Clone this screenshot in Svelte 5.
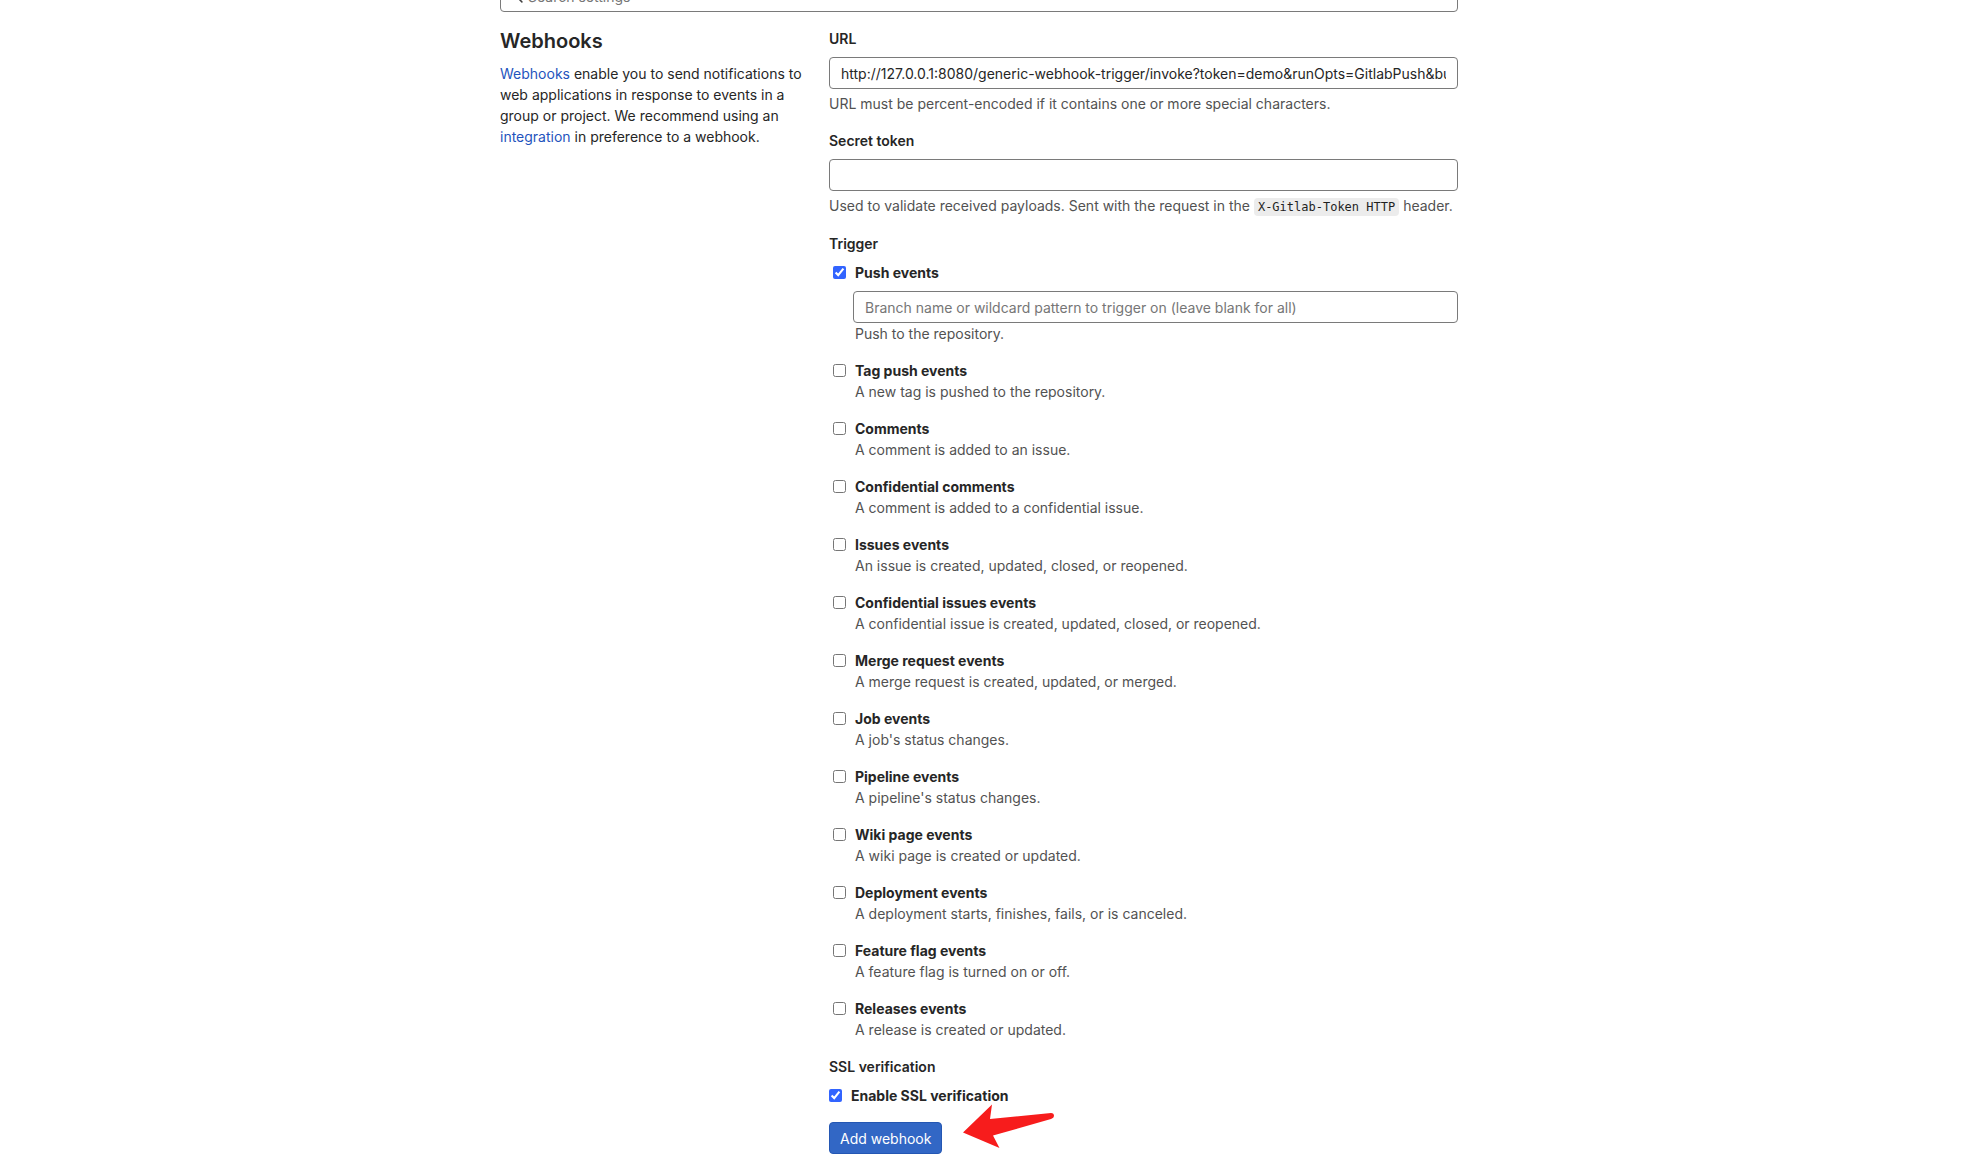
<script>
  let url = $state('http://127.0.0.1:8080/generic-webhook-trigger/invoke?token=demo&runOpts=GitlabPush&buil');
  let token = $state('');
  let branch = $state('');
  let query = $state('');
  let ssl = $state(true);

  let events = $state([
    { id: 'push', label: 'Push events', help: 'Push to the repository.', on: true, branch: true },
    { id: 'tag', label: 'Tag push events', help: 'A new tag is pushed to the repository.', on: false },
    { id: 'comments', label: 'Comments', help: 'A comment is added to an issue.', on: false },
    { id: 'conf-comments', label: 'Confidential comments', help: 'A comment is added to a confidential issue.', on: false },
    { id: 'issues', label: 'Issues events', help: 'An issue is created, updated, closed, or reopened.', on: false },
    { id: 'conf-issues', label: 'Confidential issues events', help: 'A confidential issue is created, updated, closed, or reopened.', on: false },
    { id: 'merge', label: 'Merge request events', help: 'A merge request is created, updated, or merged.', on: false },
    { id: 'job', label: 'Job events', help: "A job's status changes.", on: false },
    { id: 'pipeline', label: 'Pipeline events', help: "A pipeline's status changes.", on: false },
    { id: 'wiki', label: 'Wiki page events', help: 'A wiki page is created or updated.', on: false },
    { id: 'deployment', label: 'Deployment events', help: 'A deployment starts, finishes, fails, or is canceled.', on: false },
    { id: 'flag', label: 'Feature flag events', help: 'A feature flag is turned on or off.', on: false },
    { id: 'releases', label: 'Releases events', help: 'A release is created or updated.', on: false }
  ]);
</script>

<main class="page">
  <div class="search">
    <svg class="search-icon" viewBox="0 0 16 16" aria-hidden="true">
      <circle cx="6.5" cy="6.5" r="4.5" fill="none" stroke="currentColor" stroke-width="2" />
      <path d="M10 10l4.5 4.5" stroke="currentColor" stroke-width="2" stroke-linecap="round" />
    </svg>
    <input class="field" type="search" aria-label="Search settings" placeholder="Search settings" bind:value={query} />
  </div>

  <div class="columns">
    <section class="intro">
      <h1>Webhooks</h1>
      <p>
        <a href="#webhooks">Webhooks</a> enable you to send notifications to web applications in response to events in a
        group or project. We recommend using an <a href="#integration">integration</a> in preference to a webhook.
      </p>
    </section>

    <form class="form" onsubmit={(e) => e.preventDefault()}>
      <div class="group">
        <label class="title" for="url">URL</label>
        <input class="field" id="url" type="text" bind:value={url} />
        <p class="help">URL must be percent-encoded if it contains one or more special characters.</p>
      </div>

      <div class="group">
        <label class="title" for="token">Secret token</label>
        <input class="field" id="token" type="password" bind:value={token} />
        <p class="help token-help">
          Used to validate received payloads. Sent with the request in the <code>X-Gitlab-Token HTTP</code> header.
        </p>
      </div>

      <fieldset>
        <legend class="title">Trigger</legend>
        <ul class="events">
          {#each events as event (event.id)}
            <li>
              <div class="check">
                <input type="checkbox" id={event.id} bind:checked={event.on} />
                <label for={event.id}>{event.label}</label>
              </div>
              {#if event.branch}
                <input
                  class="field branch"
                  type="text"
                  aria-label="Branch name or wildcard pattern"
                  placeholder="Branch name or wildcard pattern to trigger on (leave blank for all)"
                  bind:value={branch}
                />
              {/if}
              <p class="event-help">{event.help}</p>
            </li>
          {/each}
        </ul>
      </fieldset>

      <fieldset>
        <legend class="title">SSL verification</legend>
        <div class="check ssl">
          <input type="checkbox" id="ssl" bind:checked={ssl} />
          <label for="ssl">Enable SSL verification</label>
        </div>
      </fieldset>

      <div class="actions">
        <button type="submit">Add webhook</button>
        <svg class="arrow" viewBox="0 0 92 46" aria-hidden="true">
          <path d="M0 28.5L29 .5L27 15L88 9Q91 9 91 12Q91 14 88 15L30 31.5L36.500 44Z" fill="#f71c1c" />
        </svg>
      </div>
    </form>
  </div>
</main>

<style>
  :global(body) {
    margin: 0;
    background: #fff;
    overflow: hidden;
  }

  .page {
    box-sizing: border-box;
    max-width: 990px;
    margin: -20px auto 0;
    padding: 0 20px 20px 12px;
    font: 14px/21px Inter, 'Noto Sans', sans-serif;
    color: #262626;
  }

  h1, p, ul, fieldset, legend {
    margin: 0;
    padding: 0;
    border: 0;
  }

  ul {
    list-style: none;
  }

  a {
    color: #1f54bd;
    text-decoration: none;
  }

  .field {
    box-sizing: border-box;
    display: block;
    width: 100%;
    height: 32px;
    padding: 0 11px;
    border: 1px solid #7a7a7a;
    border-radius: 4px;
    background: #fff;
    color: #262626;
    font: inherit;
  }

  .field::placeholder {
    color: #767676;
    opacity: 1;
  }

  .search {
    position: relative;
  }

  .search .field {
    padding-left: 27px;
  }

  .search-icon {
    position: absolute;
    left: 11px;
    top: 11px;
    width: 12px;
    height: 12px;
    color: #404040;
  }

  .columns {
    display: grid;
    grid-template-columns: 311px 1fr;
    column-gap: 18px;
    padding-top: 16px;
  }

  h1 {
    font-size: 20px;
    line-height: 26px;
    font-weight: 600;
    margin-bottom: 9px;
  }

  .title {
    display: block;
    margin-bottom: 8px;
    font-weight: 600;
  }

  .group {
    margin-bottom: 16px;
  }

  .help {
    margin-top: 4px;
    color: #525252;
  }

  .token-help {
    line-height: 22px;
  }

  code {
    padding: 2px 4px;
    border-radius: 4px;
    background: #ececec;
    color: #1f1f1f;
    font: 12px/16px 'DejaVu Sans Mono', monospace;
  }

  .events {
    display: grid;
    row-gap: 16px;
    margin-bottom: 16px;
  }

  .check {
    display: flex;
    align-items: center;
    gap: 9px;
    padding-left: 4px;
    font-weight: 700;
  }

  .check input {
    width: 13px;
    height: 13px;
    margin: 0;
    accent-color: #3264ff;
  }

  .ssl {
    padding-left: 0;
    margin-bottom: 16px;
  }

  .branch {
    width: calc(100% - 24px);
    margin: 8px 0 0 24px;
  }

  .event-help {
    padding-left: 26px;
    color: #525252;
  }

  .actions {
    position: relative;
  }

  button {
    height: 32px;
    padding: 0 10px;
    border: 1px solid #2457b3;
    border-radius: 4px;
    background: #3267c5;
    color: #fff;
    font: inherit;
  }

  .arrow {
    position: absolute;
    left: 134px;
    top: -18px;
    width: 92px;
    height: 46px;
  }
</style>
